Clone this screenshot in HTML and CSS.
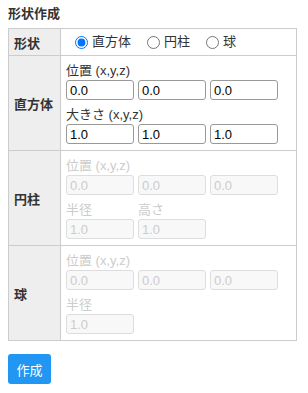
FILE: index.html
```html
<!DOCTYPE html>
<html lang="ja">

<head>
    <meta charset="UTF-8">
    <meta name="viewport" content="width=device-width, initial-scale=1.0">
    <title>形状作成</title>
    <link rel="stylesheet" href="styles.css">
</head>

<body>
    <div class="page">
        <h3 class="title">形状作成</h3>
        <table class="shape-table">
            <tr class="row-kind">
                <th>形状</th>
                <td>
                    <div class="radios">
                        <label class="radio"><input type="radio" name="kind" checked> 直方体</label>
                        <label class="radio"><input type="radio" name="kind"> 円柱</label>
                        <label class="radio"><input type="radio" name="kind"> 球</label>
                    </div>
                </td>
            </tr>
            <tr>
                <th>直方体</th>
                <td>
                    <div class="field-label">位置 (x,y,z)</div>
                    <div class="inputs">
                        <input type="text" value="0.0">
                        <input type="text" value="0.0">
                        <input type="text" value="0.0">
                    </div>
                    <div class="field-label next">大きさ (x,y,z)</div>
                    <div class="inputs">
                        <input type="text" value="1.0">
                        <input type="text" value="1.0">
                        <input type="text" value="1.0">
                    </div>
                </td>
            </tr>
            <tr class="off">
                <th>円柱</th>
                <td>
                    <div class="field-label">位置 (x,y,z)</div>
                    <div class="inputs">
                        <input type="text" value="0.0" disabled>
                        <input type="text" value="0.0" disabled>
                        <input type="text" value="0.0" disabled>
                    </div>
                    <div class="inputs">
                        <div class="col">
                            <div class="field-label next">半径</div>
                            <input type="text" value="1.0" disabled>
                        </div>
                        <div class="col">
                            <div class="field-label next">高さ</div>
                            <input type="text" value="1.0" disabled>
                        </div>
                    </div>
                </td>
            </tr>
            <tr class="off">
                <th>球</th>
                <td>
                    <div class="field-label">位置 (x,y,z)</div>
                    <div class="inputs">
                        <input type="text" value="0.0" disabled>
                        <input type="text" value="0.0" disabled>
                        <input type="text" value="0.0" disabled>
                    </div>
                    <div class="field-label next">半径</div>
                    <div class="inputs">
                        <input type="text" value="1.0" disabled>
                    </div>
                </td>
            </tr>
        </table>
        <button class="create">作成</button>
    </div>
</body>

</html>
```

FILE: styles.css
```css
body {
    margin: 0;
    font-family: "Liberation Sans", "Noto Sans CJK JP", sans-serif;
    font-size: 13px;
    color: #333;
    background: #fff;
}

.page {
    padding: 4px 8px;
}

.title {
    margin: 0 0 4px;
    font-size: 13px;
    line-height: 20px;
    font-weight: bold;
}

.shape-table {
    border-collapse: collapse;
    width: 289px;
}

.shape-table th,
.shape-table td {
    border: 1px solid #ccc;
}

.shape-table th {
    width: 41px;
    background: #eee;
    text-align: left;
    padding: 0 5px;
    font-weight: bold;
    white-space: nowrap;
}

.shape-table td {
    padding: 5px 5px 6px;
}

.row-kind td {
    padding: 0 5px;
    height: 26px;
}

.radios {
    display: flex;
    align-items: center;
    padding-left: 9px;
}

.radio {
    display: flex;
    align-items: center;
    margin-right: 16px;
    line-height: 18px;
}

.radio input {
    width: 13px;
    height: 13px;
    margin: 0 4px 0 0;
}

.field-label {
    line-height: 19px;
    height: 19px;
}

.field-label.next {
    margin-top: 5px;
}

.inputs {
    display: flex;
    gap: 4px;
}

.col {
    display: flex;
    flex-direction: column;
}

.inputs input {
    box-sizing: border-box;
    width: 68px;
    height: 20px;
    margin: 0;
    padding: 0 3px;
    border: 1px solid #999;
    border-radius: 3px;
    font-family: "Liberation Sans", sans-serif;
    font-size: 13px;
    color: #000;
    background: #fff;
}

.off .field-label {
    color: #ccc;
}

.inputs input:disabled {
    border-color: #ddd;
    background: #f8f8f8;
    color: #ccc;
}

.create {
    margin-top: 13px;
    width: 43px;
    height: 30px;
    padding: 0;
    border: none;
    border-radius: 3px;
    background: #2196f3;
    color: #fff;
    font-family: "Liberation Sans", "Noto Sans CJK JP", sans-serif;
    font-size: 13px;
    cursor: pointer;
}
```
